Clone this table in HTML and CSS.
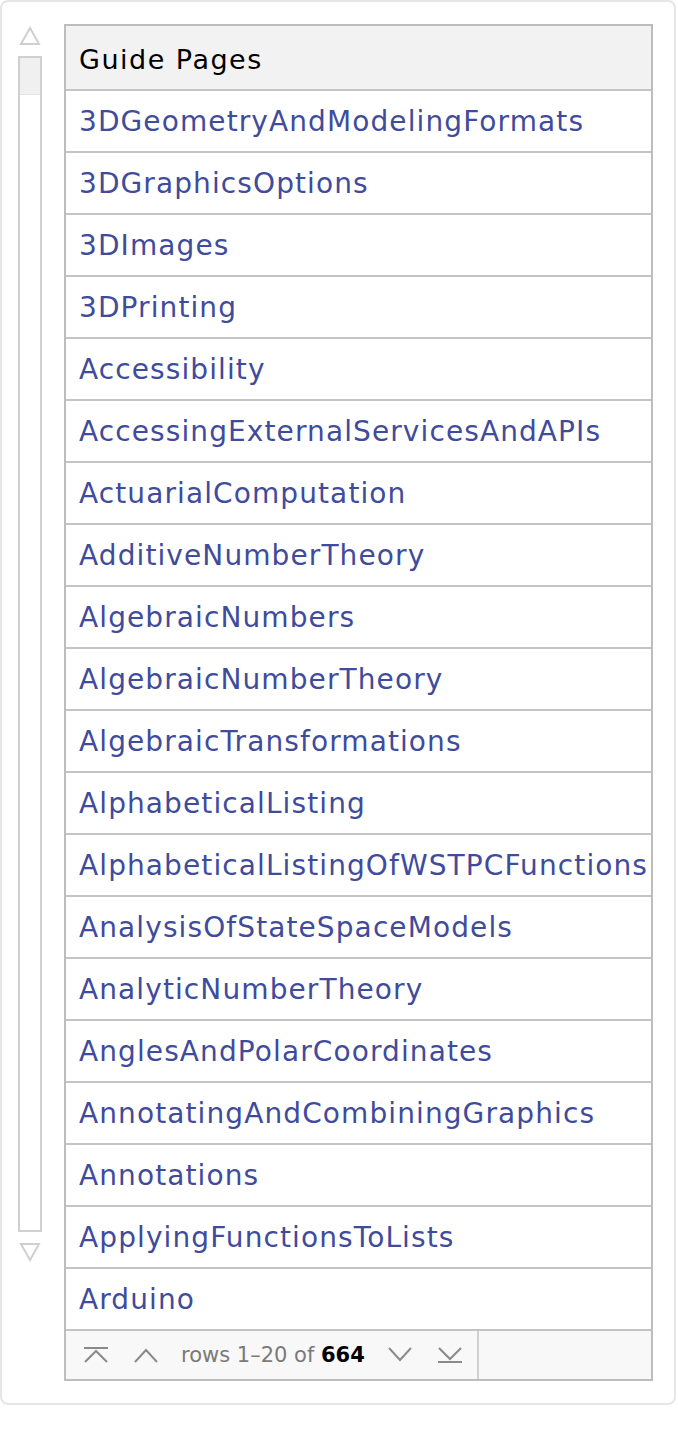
FILE: index.html
```html
<!DOCTYPE html>
<html lang="en">
<head>
    <meta charset="UTF-8">
    <title>Guide Pages</title>
    <link rel="stylesheet" href="styles.css">
</head>
<body>
    <div class="panel">
        <div class="scroller">
            <svg class="arrow" width="22" height="20" viewBox="0 0 22 20"><path d="M2 18 L11 2 L20 18 Z" fill="none" stroke="#cfcfcf" stroke-width="2"/></svg>
            <div class="track"><div class="thumb"></div></div>
            <svg class="arrow" width="22" height="20" viewBox="0 0 22 20"><path d="M2 2 L11 18 L20 2 Z" fill="none" stroke="#cfcfcf" stroke-width="2"/></svg>
        </div>
        <div class="grid">
            <div class="head">Guide Pages</div>
            <div class="row">3DGeometryAndModelingFormats</div>
            <div class="row">3DGraphicsOptions</div>
            <div class="row">3DImages</div>
            <div class="row">3DPrinting</div>
            <div class="row">Accessibility</div>
            <div class="row">AccessingExternalServicesAndAPIs</div>
            <div class="row">ActuarialComputation</div>
            <div class="row">AdditiveNumberTheory</div>
            <div class="row">AlgebraicNumbers</div>
            <div class="row">AlgebraicNumberTheory</div>
            <div class="row">AlgebraicTransformations</div>
            <div class="row">AlphabeticalListing</div>
            <div class="row">AlphabeticalListingOfWSTPCFunctions</div>
            <div class="row">AnalysisOfStateSpaceModels</div>
            <div class="row">AnalyticNumberTheory</div>
            <div class="row">AnglesAndPolarCoordinates</div>
            <div class="row">AnnotatingAndCombiningGraphics</div>
            <div class="row">Annotations</div>
            <div class="row">ApplyingFunctionsToLists</div>
            <div class="row">Arduino</div>
            <div class="foot">
                <div class="pager">
                    <svg class="icon" width="26" height="18" viewBox="0 0 26 18"><path d="M1 2 H25 M2 16 L13 5 L24 16" fill="none" stroke="#8a8a8a" stroke-width="2"/></svg>
                    <svg class="icon" width="26" height="18" viewBox="0 0 26 18"><path d="M2 16 L13 4 L24 16" fill="none" stroke="#8a8a8a" stroke-width="2"/></svg>
                    <span class="count">rows 1&ndash;20 of <b>664</b></span>
                    <svg class="icon" width="26" height="18" viewBox="0 0 26 18"><path d="M2 2 L13 14 L24 2" fill="none" stroke="#8a8a8a" stroke-width="2"/></svg>
                    <svg class="icon" width="26" height="18" viewBox="0 0 26 18"><path d="M2 2 L13 13 L24 2 M1 16 H25" fill="none" stroke="#8a8a8a" stroke-width="2"/></svg>
                </div>
            </div>
        </div>
    </div>
</body>
</html>
```

FILE: styles.css
```css
body {
    margin: 0;
    font-family: "DejaVu Sans", Verdana, sans-serif;
}
.panel {
    display: flex;
    width: 676px;
    box-sizing: border-box;
    border: 2px solid #e6e6e6;
    border-radius: 8px;
    padding: 22px 21px 22px 16px;
}
.scroller {
    width: 24px;
    margin-right: 22px;
    display: flex;
    flex-direction: column;
    align-items: center;
}
.arrow {
    display: block;
    margin: 2px 0 10px;
}
.scroller .arrow:last-child {
    margin: 10px 0 0;
}
.track {
    width: 24px;
    height: 1176px;
    box-sizing: border-box;
    border: 2px solid #d0d0d0;
}
.thumb {
    height: 36px;
    background: #f0f0f0;
    border-bottom: 1px solid #e2e2e2;
}
.grid {
    width: 589px;
    border: 2px solid #bdbdbd;
    box-sizing: border-box;
}
.head {
    height: 58px;
    padding: 5px 13px 0;
    background: #f2f2f2;
    border-bottom: 2px solid #c4c4c4;
    font-size: 27px;
    letter-spacing: 1.5px;
    line-height: 58px;
    color: #000;
}
.row {
    height: 60px;
    border-bottom: 2px solid #c4c4c4;
    padding: 0 13px;
    font-size: 28px;
    letter-spacing: 1.1px;
    line-height: 61px;
    color: #3f4b9b;
    white-space: nowrap;
}
.foot {
    height: 48px;
    background: #f8f8f8;
}
.pager {
    display: inline-flex;
    align-items: center;
    height: 48px;
    padding: 0 14px 0 17px;
    border-right: 2px solid #d0d0d0;
    box-sizing: border-box;
}
.icon {
    display: block;
    margin-right: 24px;
}
.pager .icon:last-child {
    margin-right: 0;
}
.count {
    font-size: 21px;
    color: #7a7a7a;
    margin-right: 22px;
    margin-left: -2px;
}
.count b {
    color: #000;
}
```
